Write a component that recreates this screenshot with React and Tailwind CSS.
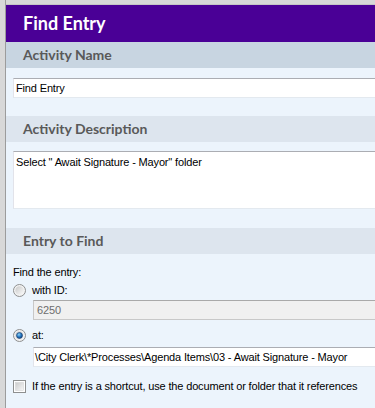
import React from "react";

const body = { fontFamily: '"Liberation Sans", Arial, sans-serif' };
const head = { fontFamily: 'Lato, "Open Sans", sans-serif' };

function Radio({ checked }) {
  return (
    <svg width="13" height="13" viewBox="0 0 13 13" className="shrink-0">
      <defs>
        <linearGradient id={checked ? "rgOn" : "rgOff"} x1="0" y1="0" x2="1" y2="1">
          <stop offset="0" stopColor="#c9c9c9" />
          <stop offset="1" stopColor="#fbfbfb" />
        </linearGradient>
        <radialGradient id="dot" cx="0.4" cy="0.35" r="0.7">
          <stop offset="0" stopColor="#8fd3f7" />
          <stop offset="0.5" stopColor="#2a7cc4" />
          <stop offset="1" stopColor="#0b3a78" />
        </radialGradient>
      </defs>
      <circle cx="6.5" cy="6.5" r="6" fill="#f2f2f2" stroke="#8e8f8f" />
      <circle cx="6.5" cy="6.5" r="4.2" fill={`url(#${checked ? "rgOn" : "rgOff"})`} />
      {checked && <circle cx="6.5" cy="6.5" r="3" fill="url(#dot)" stroke="#1d3f6e" strokeWidth="0.6" />}
    </svg>
  );
}

function Checkbox() {
  return (
    <svg width="13" height="13" viewBox="0 0 13 13" className="shrink-0">
      <defs>
        <linearGradient id="cb" x1="0" y1="0" x2="1" y2="1">
          <stop offset="0" stopColor="#cbcbcb" />
          <stop offset="1" stopColor="#f7f7f7" />
        </linearGradient>
      </defs>
      <rect x="0.5" y="0.5" width="12" height="12" fill="#ffffff" stroke="#8e8f8f" />
      <rect x="2.5" y="2.5" width="8" height="8" fill="url(#cb)" stroke="#d0d0d0" strokeWidth="0.5" />
    </svg>
  );
}

function SectionHead({ children, dark }) {
  return (
    <div
      className={`h-[26px] pl-[17px] text-[14px] font-bold leading-[26px] text-[#595959] ${dark ? "bg-[#c8d5e1]" : "bg-[#dde5ee]"}`}
      style={head}
    >
      {children}
    </div>
  );
}

export default function App() {
  return (
    <div className="flex h-[408px] w-[375px] overflow-hidden bg-[#d8d8d8]" style={body}>
      <div className="w-[5px] shrink-0" />
      <div className="flex min-w-0 flex-1 flex-col border-l border-[#9c9c9c]">
        {/* window top strip */}
        <div className="h-[5px] shrink-0 border-b border-[#c6c6c6] bg-[#d8d8d8]" />

        {/* title */}
        <div className="h-[37px] shrink-0 bg-[#4a0096] pl-[17px] text-[18px] font-bold leading-[36px] text-white" style={head}>
          Find Entry
        </div>

        <SectionHead dark>Activity Name</SectionHead>

        <div className="flex-1 bg-[#ecf4fc] pl-[7px] tracking-[-0.15px]">
          <div className="mt-[10px] h-[20px] border border-r-0 border-[#e2e3ea] border-t-[#abadb3] border-b-[#e3e9ef] bg-white pl-[2px] text-[11px] leading-[18px] text-black">
            Find Entry
          </div>

          <div className="-ml-[7px] mt-[18px] tracking-normal">
            <SectionHead>Activity Description</SectionHead>
          </div>

          <div className="mt-[9px] h-[58px] border border-r-0 border-[#e2e3ea] border-t-[#abadb3] border-b-[#e3e9ef] bg-white pl-[2px] pt-[1px] text-[11px] leading-[18px] text-black">
            Select " Await Signature - Mayor" folder
          </div>

          <div className="-ml-[7px] mt-[19px] tracking-normal">
            <SectionHead>Entry to Find</SectionHead>
          </div>

          <div className="mt-[12px] text-[11px] leading-[13px] text-black">Find the entry:</div>

          <div className="mt-[5px] flex h-[13px] items-start gap-[6px] text-[11px] leading-[13px] text-black">
            <Radio />
            <span>with ID:</span>
          </div>

          <div className="ml-[20px] mt-[3px] h-[20px] border border-r-0 border-[#c8c8c8] border-t-[#a9a9a9] bg-[#f0f0f0] pl-[3px] text-[11px] leading-[18px] text-[#6d6d6d]">
            6250
          </div>

          <div className="mt-[9px] flex h-[13px] items-start gap-[6px] text-[11px] leading-[13px] text-black">
            <Radio checked />
            <span>at:</span>
          </div>

          <div className="ml-[20px] mt-[5px] h-[20px] whitespace-nowrap border border-r-0 border-[#e2e3ea] border-t-[#abadb3] border-b-[#e3e9ef] bg-white pl-[1px] text-[11px] leading-[18px] text-black">
            \City Clerk\*Processes\Agenda Items\03 - Await Signature - Mayor
          </div>

          <div className="mt-[13px] flex h-[13px] items-start gap-[6px] whitespace-nowrap text-[11px] leading-[13px] text-black">
            <Checkbox />
            <span>If the entry is a shortcut, use the document or folder that it references</span>
          </div>
        </div>
      </div>
    </div>
  );
}
